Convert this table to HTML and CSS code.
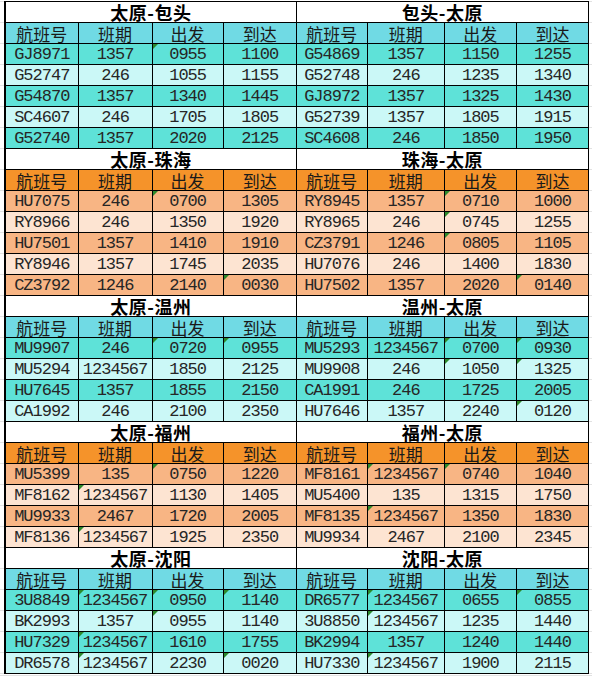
FILE: index.html
```html
<!DOCTYPE html>
<html lang="zh-CN">
<head>
<meta charset="utf-8">
<title>航班时刻表</title>
<link rel="stylesheet" href="styles.css">
</head>
<body>
<table class="sheet">
<colgroup>
<col class="c1"><col class="c2"><col class="c3"><col class="c4">
<col class="c5"><col class="c6"><col class="c7"><col class="c8">
</colgroup>
<tbody>
<!-- block 1 -->
<tr class="title"><td colspan="4">太原-包头</td><td colspan="4" class="mid">包头-太原</td></tr>
<tr class="hd cyan"><td>航班号</td><td>班期</td><td>出发</td><td>到达</td><td class="mid">航班号</td><td>班期</td><td>出发</td><td>到达</td></tr>
<tr class="cy-d"><td>GJ8971</td><td>1357</td><td class="m">0955</td><td>1100</td><td class="mid">G54869</td><td>1357</td><td>1150</td><td>1255</td></tr>
<tr class="cy-l"><td>G52747</td><td>246</td><td>1055</td><td>1155</td><td class="mid">G52748</td><td>246</td><td>1235</td><td>1340</td></tr>
<tr class="cy-d"><td>G54870</td><td>1357</td><td>1340</td><td>1445</td><td class="mid">GJ8972</td><td>1357</td><td>1325</td><td>1430</td></tr>
<tr class="cy-l"><td>SC4607</td><td>246</td><td>1705</td><td>1805</td><td class="mid">G52739</td><td>1357</td><td>1805</td><td>1915</td></tr>
<tr class="cy-d"><td>G52740</td><td>1357</td><td>2020</td><td>2125</td><td class="mid">SC4608</td><td>246</td><td>1850</td><td>1950</td></tr>
<!-- block 2 -->
<tr class="title"><td colspan="4">太原-珠海</td><td colspan="4" class="mid">珠海-太原</td></tr>
<tr class="hd orange"><td>航班号</td><td>班期</td><td>出发</td><td>到达</td><td class="mid">航班号</td><td>班期</td><td>出发</td><td>到达</td></tr>
<tr class="or-d"><td>HU7075</td><td>246</td><td class="m">0700</td><td>1305</td><td class="mid">RY8945</td><td>1357</td><td class="m">0710</td><td>1000</td></tr>
<tr class="or-l"><td>RY8966</td><td>246</td><td>1350</td><td>1920</td><td class="mid">RY8965</td><td>246</td><td class="m">0745</td><td>1255</td></tr>
<tr class="or-d"><td>HU7501</td><td>1357</td><td>1410</td><td>1910</td><td class="mid">CZ3791</td><td>1246</td><td class="m">0805</td><td>1105</td></tr>
<tr class="or-l"><td>RY8946</td><td>1357</td><td>1745</td><td>2035</td><td class="mid">HU7076</td><td>246</td><td>1400</td><td>1830</td></tr>
<tr class="or-d"><td>CZ3792</td><td>1246</td><td>2140</td><td class="m">0030</td><td class="mid">HU7502</td><td>1357</td><td>2020</td><td class="m">0140</td></tr>
<!-- block 3 -->
<tr class="title"><td colspan="4">太原-温州</td><td colspan="4" class="mid">温州-太原</td></tr>
<tr class="hd cyan"><td>航班号</td><td>班期</td><td>出发</td><td>到达</td><td class="mid">航班号</td><td>班期</td><td>出发</td><td>到达</td></tr>
<tr class="cy-d"><td>MU9907</td><td>246</td><td class="m">0720</td><td class="m">0955</td><td class="mid">MU5293</td><td>1234567</td><td class="m">0700</td><td class="m">0930</td></tr>
<tr class="cy-l"><td>MU5294</td><td>1234567</td><td>1850</td><td>2125</td><td class="mid">MU9908</td><td>246</td><td class="m">1050</td><td class="m">1325</td></tr>
<tr class="cy-d"><td>HU7645</td><td>1357</td><td>1855</td><td>2150</td><td class="mid">CA1991</td><td>246</td><td>1725</td><td>2005</td></tr>
<tr class="cy-l"><td>CA1992</td><td>246</td><td>2100</td><td>2350</td><td class="mid">HU7646</td><td>1357</td><td>2240</td><td class="m">0120</td></tr>
<!-- block 4 -->
<tr class="title"><td colspan="4">太原-福州</td><td colspan="4" class="mid">福州-太原</td></tr>
<tr class="hd orange"><td>航班号</td><td>班期</td><td>出发</td><td>到达</td><td class="mid">航班号</td><td>班期</td><td>出发</td><td>到达</td></tr>
<tr class="or-d"><td>MU5399</td><td>135</td><td class="m">0750</td><td>1220</td><td class="mid">MF8161</td><td class="m">1234567</td><td class="m">0740</td><td>1040</td></tr>
<tr class="or-l"><td>MF8162</td><td class="m">1234567</td><td>1130</td><td>1405</td><td class="mid">MU5400</td><td>135</td><td>1315</td><td>1750</td></tr>
<tr class="or-d"><td>MU9933</td><td>2467</td><td>1720</td><td>2005</td><td class="mid">MF8135</td><td class="m">1234567</td><td>1350</td><td>1830</td></tr>
<tr class="or-l"><td>MF8136</td><td class="m">1234567</td><td>1925</td><td>2350</td><td class="mid">MU9934</td><td>2467</td><td>2100</td><td>2345</td></tr>
<!-- block 5 -->
<tr class="title"><td colspan="4">太原-沈阳</td><td colspan="4" class="mid">沈阳-太原</td></tr>
<tr class="hd cyan"><td>航班号</td><td>班期</td><td>出发</td><td>到达</td><td class="mid">航班号</td><td>班期</td><td>出发</td><td>到达</td></tr>
<tr class="cy-d"><td>3U8849</td><td class="m">1234567</td><td class="m">0950</td><td class="m">1140</td><td class="mid">DR6577</td><td class="m">1234567</td><td>0655</td><td class="m">0855</td></tr>
<tr class="cy-l"><td>BK2993</td><td>1357</td><td class="m">0955</td><td>1140</td><td class="mid">3U8850</td><td class="m">1234567</td><td>1235</td><td>1440</td></tr>
<tr class="cy-d"><td>HU7329</td><td class="m">1234567</td><td>1610</td><td>1755</td><td class="mid">BK2994</td><td>1357</td><td>1240</td><td>1440</td></tr>
<tr class="cy-l"><td>DR6578</td><td class="m">1234567</td><td>2230</td><td class="m">0020</td><td class="mid">HU7330</td><td class="m">1234567</td><td>1900</td><td>2115</td></tr>
</tbody>
</table>
</body>
</html>
```

FILE: styles.css
```css
html, body {
  margin: 0;
  padding: 0;
}
body {
  background-color: #ffffff;
  background-image: repeating-linear-gradient(to bottom, #e2e2e2 0, #e2e2e2 1px, transparent 1px, transparent 21px);
  background-position: 0 1px;
  font-family: "Liberation Mono", "Noto Sans CJK SC", monospace;
  color: #262626;
  padding-top: 1px;
}
.sheet {
  border-collapse: collapse;
  table-layout: fixed;
  width: 585px;
  margin-left: 4px;
  border-left: 2px solid #000;
  border-right: 1px solid #000;
}
.c1 { width: 73px; }
.c2 { width: 74px; }
.c3 { width: 71px; }
.c4 { width: 73px; }
.c5 { width: 71px; }
.c6 { width: 77px; }
.c7 { width: 72px; }
.c8 { width: 72px; }

.sheet tr {
  height: 21px;
}
.sheet td {
  border: 1px solid #000;
  padding: 0;
  text-align: center;
  vertical-align: middle;
  white-space: nowrap;
  line-height: 19px;
  font-size: 17px;
  letter-spacing: -1px;
  position: relative;
}
.sheet td:first-child {
  border-left: 2px solid #000;
}
.title td {
  background: #ffffff;
  font-family: "Noto Sans CJK SC", sans-serif;
  font-weight: 700;
  font-size: 18px;
  line-height: 19px;
  letter-spacing: 0.5px;
  color: #000;
}
.hd td {
  font-family: "Noto Sans CJK SC", sans-serif;
  font-size: 17px;
  line-height: 19px;
  letter-spacing: 0;
  color: #1a1a1a;
}
.hd.cyan td { background: #70dae4; }
.hd.orange td { background: #f5932a; }
.cy-d td { background: #5ee2d8; }
.cy-l td { background: #cbf8f7; }
.or-d td { background: #f8b584; }
.or-l td { background: #fde4d2; }

.m::before {
  content: "";
  position: absolute;
  left: 0;
  top: 0;
  width: 0;
  height: 0;
  border-top: 5px solid #2c8a2c;
  border-right: 5px solid transparent;
}
```
